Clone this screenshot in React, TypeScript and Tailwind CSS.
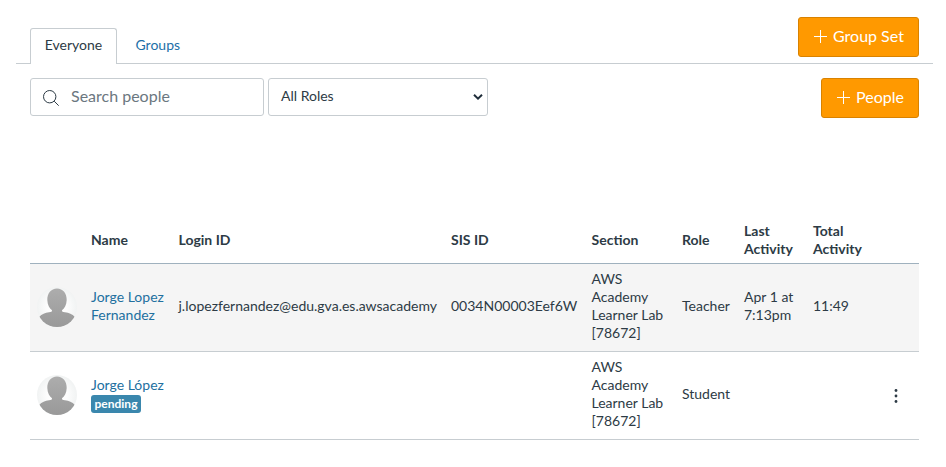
import React from "react";

const columns =
  "grid grid-cols-[61px_87.5px_272.500px_140.500px_90.500px_62px_69px_60px_1fr] items-center";

function Avatar() {
  return (
    <svg viewBox="0 0 40 40" className="mt-0.5 ml-[7px] size-10">
      <defs>
        <clipPath id="disc">
          <circle cx="20" cy="20" r="20" />
        </clipPath>
        <radialGradient id="back">
          <stop offset="0.5" stopColor="#fdfdfd" />
          <stop offset="1" stopColor="#f1f3f3" />
        </radialGradient>
        <linearGradient id="person" x1="0" y1="0" x2="0" y2="1">
          <stop offset="0" stopColor="#adadad" />
          <stop offset="1" stopColor="#999999" />
        </linearGradient>
      </defs>
      <g clipPath="url(#disc)">
        <rect width="40" height="40" fill="url(#back)" />
        <path
          d="M20 1.500C26 1.500 29.900 6.500 29.700 13C29.500 18 27.500 21.300 25.200 23C24.200 24.400 25.500 25 28 25.200C32 25.600 35 27 38 30V40H2V30C5 27 8 25.600 12 25.200C14.500 25 15.800 24.400 14.800 23C12.500 21.300 10.500 18 10.300 13C10.100 6.500 14 1.500 20 1.500Z"
          fill="url(#person)"
        />
      </g>
    </svg>
  );
}

function Plus() {
  return (
    <svg viewBox="0 0 14 14" className="mr-[5px] size-3.5" stroke="currentColor" strokeWidth="1">
      <path d="M6.500 1V14M0 7.500H13" fill="none" />
    </svg>
  );
}

function ActionButton({ label, width }: { label: string; width: string }) {
  return (
    <button
      className={`flex h-10 items-center rounded-[3px] border border-[#d98200] bg-[#ff9900] pb-0.5 pl-[15px] text-base text-white ${width}`}
    >
      <Plus />
      {label}
    </button>
  );
}

function Section() {
  return (
    <div>
      AWS
      <br />
      Academy
      <br />
      Learner Lab
      <br />
      [78672]
    </div>
  );
}

export default function App() {
  return (
    <div className="h-[467px] w-[946px] overflow-hidden bg-white font-['Lato',sans-serif] text-sm leading-[18px] text-[#2d3b45]">
      <header className="ml-4 flex h-16 w-[917px] pt-[17px]">
        <div className="mt-[11px] w-3.5 border-b border-[#c7cdd1]" />
        <div className="mt-[11px] flex w-[87px] justify-center rounded-t-[3px] border border-b-0 border-[#c7cdd1] pt-[7px]">
          Everyone
        </div>
        <div className="mt-[11px] flex-1 border-b border-[#c7cdd1] pt-2 pl-[18.500px] text-[#1d6fa8]">
          Groups
        </div>
        <div className="flex w-[135px] border-b border-[#c7cdd1]">
          <ActionButton label="Group Set" width="w-[121px]" />
        </div>
      </header>

      <div className="mt-3.5 ml-[30px] flex w-[889px] items-start">
        <div className="flex h-[38px] w-[234px] items-center rounded-[3px] border border-[#c7cdd1] pb-0.5 pl-3 text-base text-[#6b7780]">
          <svg viewBox="0 0 16 16" className="mt-1 mr-3 size-4" fill="none" stroke="#2d3b45">
            <circle cx="6.700" cy="6.700" r="6.200" />
            <path d="M11.200 11.200L15.700 15.700" />
          </svg>
          Search people
        </div>
        <div className="ml-1 flex h-[38px] w-[220px] items-center justify-between rounded-[3px] border border-[#c7cdd1] pr-1 pl-3">
          <span className="pb-0.5">All Roles</span>
          <svg viewBox="0 0 10 6" className="h-1.5 w-2.5" fill="none" stroke="#1f2d3a" strokeWidth="2">
            <path d="M1 0.800L5 4.600L9 0.800" />
          </svg>
        </div>
        <div className="ml-auto">
          <ActionButton label="People" width="w-[98px]" />
        </div>
      </div>

      <div className="mt-[97px] ml-[30px] w-[889px]">
        <div className={`${columns} h-[49px] border-b border-[#9fb1be] pt-0.5 font-bold`}>
          <div />
          <div>Name</div>
          <div>Login ID</div>
          <div>SIS ID</div>
          <div>Section</div>
          <div>Role</div>
          <div>Last<br />Activity</div>
          <div>Total<br />Activity</div>
          <div />
        </div>
        <div className={`${columns} h-[88px] border-b border-[#c7cdd1] bg-[#f5f5f5] pb-[3px]`}>
          <Avatar />
          <div className="text-[#22709f]">Jorge Lopez<br />Fernandez</div>
          <div>j.lopezfernandez@edu.gva.es.awsacademy</div>
          <div>0034N00003Eef6W</div>
          <Section />
          <div>Teacher</div>
          <div>Apr 1 at<br />7:13pm</div>
          <div>11:49</div>
          <div />
        </div>
        <div className={`${columns} h-[88px] border-b border-[#c7cdd1] pb-[3px]`}>
          <Avatar />
          <div className="text-[#22709f]">
            Jorge López
            <div className="mt-px -mb-px flex h-[18px] w-[50px] items-center justify-center rounded-[3px] bg-[#3a87ad] pb-px text-xs font-bold text-white">
              pending
            </div>
          </div>
          <div />
          <div />
          <Section />
          <div>Student</div>
          <div />
          <div />
          <svg viewBox="0 0 4 14" className="mt-1 ml-[21px] h-3.5 w-1" fill="#2d3b45">
            <circle cx="2" cy="1.500" r="1.400" />
            <circle cx="2" cy="7" r="1.400" />
            <circle cx="2" cy="12.500" r="1.400" />
          </svg>
        </div>
      </div>
    </div>
  );
}
